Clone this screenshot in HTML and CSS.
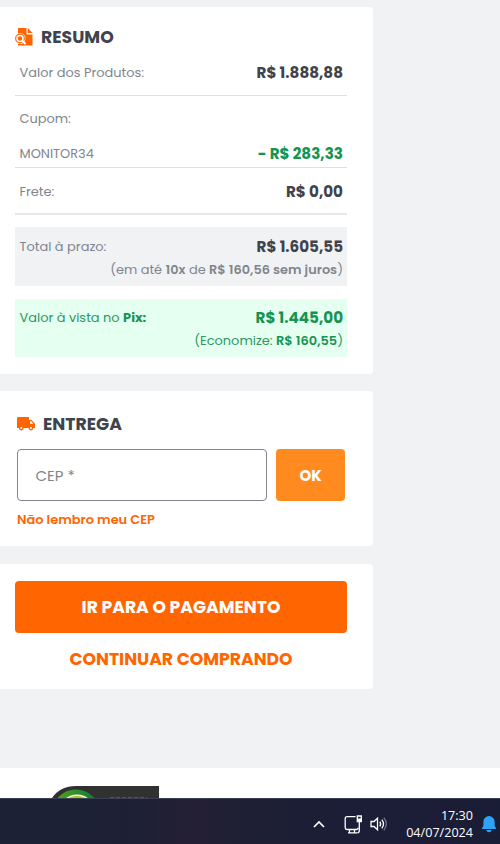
FILE: index.html
```html
<!DOCTYPE html>
<html lang="pt-BR">
<head>
<meta charset="utf-8">
<title>Resumo do pedido</title>
<link rel="stylesheet" href="styles.css">
</head>
<body>
<main class="page">
  <section class="card summary">
    <h2 class="title"><svg class="icon" width="18" height="18" viewBox="0 0 18 18"><path fill="#ff6500" d="M3 0h8.500v6.500H17.500v11H3z"/><path fill="#ff6500" d="M12.700 0l5 5h-5z"/><circle cx="5" cy="10.500" r="5.500" fill="#fff"/><circle cx="5" cy="10.500" r="4.900" fill="#ff6500"/><circle cx="5" cy="10.500" r="3" fill="none" stroke="#fff" stroke-width="1.500"/><path stroke="#fff" stroke-width="1.900" d="M7 12.500l3.500 3.500"/></svg><span>RESUMO</span></h2>
    <div class="row products"><span>Valor dos Produtos:</span><strong class="price">R$ 1.888,88</strong></div>
    <div class="row coupon"><span>Cupom:</span></div>
    <div class="row code"><span>MONITOR34</span><strong class="price green">- R$ 283,33</strong></div>
    <div class="row freight"><span>Frete:</span><strong class="price">R$ 0,00</strong></div>
    <div class="total">
      <div class="line"><span>Total à prazo:</span><strong class="price">R$ 1.605,55</strong></div>
      <div class="line end"><span class="installments">(em até <b>10x</b> de <b>R$ 160,56 sem juros</b>)</span></div>
    </div>
    <div class="total pix">
      <div class="line"><span class="pix-label">Valor à vista no <b>Pix:</b></span><strong class="price">R$ 1.445,00</strong></div>
      <div class="line end"><span>(Economize: <b>R$ 160,55</b>)</span></div>
    </div>
  </section>
  <section class="card delivery">
    <h2 class="title"><svg class="icon" width="18" height="14" viewBox="0 0 18 14"><path fill="#ff6500" d="M1.400 0H12v3h2.700L18 6.800V11h-1.700a2.400 2.400 0 0 1-4.800 0H6.700a2.400 2.400 0 0 1-4.800 0H0V1.400Q0 0 1.400 0z"/><circle cx="4.300" cy="11" r="1.100" fill="#fff"/><circle cx="13.900" cy="11" r="1.100" fill="#fff"/><path fill="#fff" d="M13 4.300h1.300l2 2.500H13z"/></svg><span>ENTREGA</span></h2>
    <div class="form"><div class="field">CEP *</div><div class="ok">OK</div></div>
    <div class="forgot">Não lembro meu CEP</div>
  </section>
  <section class="card actions">
    <div class="pay">IR PARA O PAGAMENTO</div>
    <div class="continue">CONTINUAR COMPRANDO</div>
  </section>
</main>
<footer class="footer">
  <svg class="seal" width="107" height="12" viewBox="0 0 107 12"><defs><clipPath id="seal-clip"><path d="M0 12Q8 0 24 0h83v12z"/></clipPath><linearGradient id="ring"><stop offset="0" stop-color="#58a618"/><stop offset="1" stop-color="#08783c"/></linearGradient></defs><g clip-path="url(#seal-clip)"><path d="M0 0h107v12H0z" fill="#313131"/><circle cx="24" cy="27.500" r="24" fill="url(#ring)"/><circle cx="25" cy="26.500" r="18" fill="#f4f8df"/><circle cx="25" cy="27" r="17" fill="#a8c517"/></g><path d="M58 11.500h37" stroke="#555" stroke-dasharray="4 2"/></svg>
</footer>
<div class="taskbar">
  <svg class="chev" width="12" height="8" viewBox="0 0 12 8"><path d="M1 7l5-5 5 5" fill="none" stroke="#fff" stroke-width="1.700"/></svg>
  <svg class="net" width="19" height="19" viewBox="0 0 19 19"><g fill="none" stroke="#fff" stroke-width="1.300"><path d="M11.500 1.700H3Q1.200 1.700 1.200 3.500v9.200q0 1.800 1.800 1.800h9.500q1.500 0 1.500-1.800M5.500 15v2.800M10.500 15v2.800M4 17.800h9M13.300 1h4v5.500h-4zM15.300 6.500v9q0 2.300-2 2.300"/></g><path fill="#fff" d="M13.300 3.500h4v3h-4z"/></svg>
  <svg class="vol" width="18" height="16" viewBox="0 0 18 16"><g fill="none" stroke="#fff" stroke-width="1.300"><path d="M1 5.500h3l3.500-3.300v11.600L4 10.500H1z"/><path d="M9.800 5.600q1.700 2.400 0 4.800M11.800 3.600q3.400 4.400 0 8.800"/><path d="M13.800 1.700q5 6.300 0 12.600" stroke="#74758a"/></g></svg>
  <div class="clock"><span>17:30</span><span>04/07/2024</span></div>
  <svg class="bell" width="16" height="18" viewBox="0 0 16 18"><path fill="#2da3f7" d="M8 1a5.600 5.600 0 0 1 5.600 5.600v3.900L15.300 14H.7l1.700-3.500V6.600A5.600 5.600 0 0 1 8 1zM5.200 15h5.600Q10 17.200 8 17.200T5.200 15z"/></svg>
</div>
</body>
</html>
```
FILE: styles.css
```css
* { box-sizing: border-box; }
body {
  margin: 0;
  width: 500px;
  height: 844px;
  overflow: hidden;
  display: flex;
  flex-direction: column;
  background: #f1f2f4;
  color: #7f858d;
  font: 12.950px/20px Poppins, Inter, "Open Sans", sans-serif;
  white-space: nowrap;
}
svg { display: block; flex: none; }
.page { height: 768px; padding-top: 7px; display: flex; flex-direction: column; gap: 17px; }
.card { width: 373px; background: #fff; border-radius: 0 4px 4px 0; padding: 0 26px 0 15px; }
.summary { height: 367px; }
.delivery { height: 155px; padding: 18px 28px 0 17px; }
.actions { height: 125px; margin-top: 1px; padding-top: 17px; }
.title { margin: 0; display: flex; align-items: center; gap: 8px; color: #3e434c; font-size: 17.25px; font-weight: 700; line-height: 30px; }
.summary .title { padding-top: 17px; height: 43px; line-height: 26px; }
.row { display: flex; align-items: center; justify-content: space-between; padding: 0 4px 0 4.500px; border-bottom: 1px solid #dedfe2; }
.products { height: 46px; }
.coupon { height: 44px; padding-top: 2px; border: 0; }
.code { height: 28px; }
.freight { height: 47px; padding-top: 2px; border-bottom: 2px solid #e6e7e9; }
.price { color: #3e434c; font-size: 15.150px; font-weight: 700; }
.green, .pix .price { color: #149451; }
.total { height: 59px; margin-top: 12px; padding: 8px 4px 0 4.500px; background: #f1f2f4; }
.line { display: flex; align-items: center; justify-content: space-between; height: 23px; }
.end { justify-content: flex-end; }
.pix { height: 58px; margin-top: 13px; padding-top: 7px; background: #e5fff1; color: #2b9961; }
.pix b { color: #149451; }
b { font-weight: 600; }
.pix-label b { font-weight: 700; }
.installments { font-size: 12.900px; }
.form { display: flex; gap: 9px; margin-top: 10px; }
.field { width: 250px; height: 52px; border: 1px solid #80858d; border-radius: 4px; padding: 1px 0 0 17.500px; display: flex; align-items: center; font-size: 15px; }
.ok { flex: 1; padding-top: 1px; background: #ff8b20; color: #fff; border-radius: 4px; display: flex; align-items: center; justify-content: center; font-size: 15px; font-weight: 700; }
.forgot { margin-top: 9px; color: #ff6500; font-weight: 600; }
.pay { height: 52px; background: #ff6500; color: #fff; border-radius: 4px; }
.pay, .continue { display: flex; align-items: center; justify-content: center; font-size: 17.200px; font-weight: 700; }
.continue { height: 52px; color: #ff6500; }
.footer { height: 30px; background: #fff; padding: 18px 0 0 52px; }
.taskbar { height: 46px; display: flex; align-items: center; padding: 5px 3px 0 313px; color: #fff; background: linear-gradient(90deg, #1c2136 0, #1d2035 130px, #251f34 195px, #1f1f33 235px, #1b1e35 300px, #1a1d36 100%); border-top: 1px solid #3b4150; }
.net { margin-left: 19px; }
.vol { margin-left: 7px; }
.clock { margin-left: auto; display: flex; flex-direction: column; align-items: flex-end; font: 12.600px/17px "Open Sans", sans-serif; }
.bell { margin-left: 8px; }
```
